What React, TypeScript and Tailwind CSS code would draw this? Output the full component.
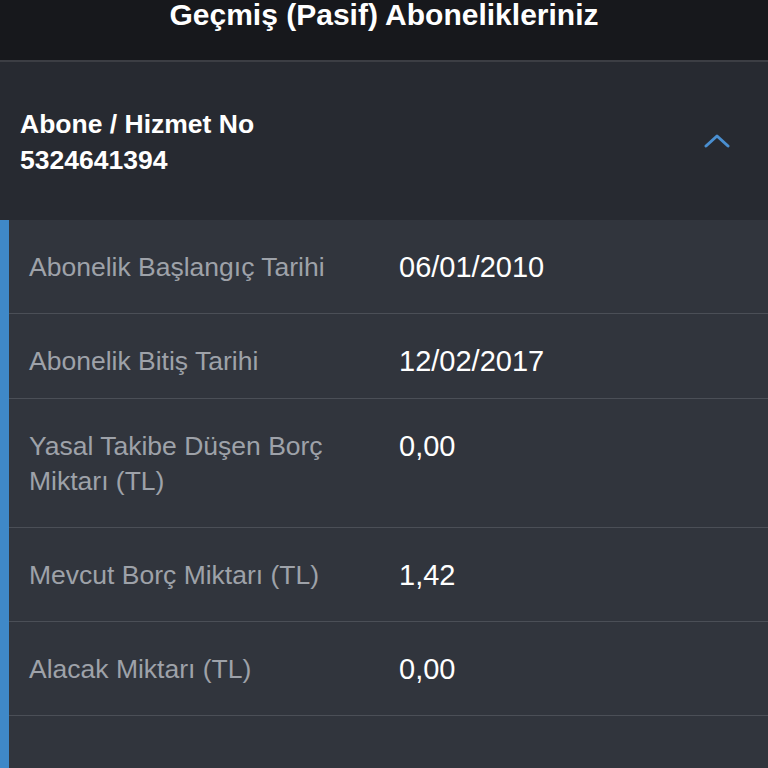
const rows = [
  { label: "Abonelik Başlangıç Tarihi", value: "06/01/2010", pb: "pb-[28px]" },
  { label: "Abonelik Bitiş Tarihi", value: "12/02/2017", pb: "pb-[19px]" },
  { label: "Yasal Takibe Düşen Borç Miktarı (TL)", value: "0,00", pb: "pb-[28px]" },
  { label: "Mevcut Borç Miktarı (TL)", value: "1,42", pb: "pb-[28px]" },
  { label: "Alacak Miktarı (TL)", value: "0,00", pb: "pb-[28px]" },
  { label: "", value: "", pb: "pb-[28px]" },
];

export default function App() {
  return (
    <div
      className="w-[768px] h-[768px] overflow-hidden bg-[#31353d]"
      style={{ fontFamily: '"Liberation Sans", Arial, sans-serif' }}
    >
      <header className="h-[62px] bg-[#17181c] border-b-2 border-[#3c3e44] flex justify-center">
        <h1 className="text-[30px] leading-[30px] font-bold text-white">
          Geçmiş (Pasif) Abonelikleriniz
        </h1>
      </header>

      <div className="h-[158px] bg-[#272a31] flex items-center justify-between pl-[20px] pr-[38px]">
        <div className="text-white font-bold text-[26.5px] leading-[36px] pt-[2px]">
          <div>Abone / Hizmet No</div>
          <div>5324641394</div>
        </div>
        <svg width="26" height="16" viewBox="0 0 26 16" fill="none" className="text-[#4a8fd0]">
          <polyline
            points="2,13 13,3 24,13"
            stroke="currentColor"
            strokeWidth="3"
            strokeLinecap="round"
            strokeLinejoin="round"
          />
        </svg>
      </div>

      <div className="border-l-[9px] border-[#3f88c8]">
        {rows.map((r, i) => (
          <div
            key={i}
            className={`flex pl-[20px] pt-[30px] ${r.pb} border-b border-[#4b4f57] min-h-[84px]`}
          >
            <div className="w-[345px] shrink-0 text-[26.5px] leading-[35px] text-[#9ea2a9]">
              {r.label}
            </div>
            <div className="ml-[25px] text-[29px] leading-[35px] text-white">{r.value}</div>
          </div>
        ))}
      </div>
    </div>
  );
}
